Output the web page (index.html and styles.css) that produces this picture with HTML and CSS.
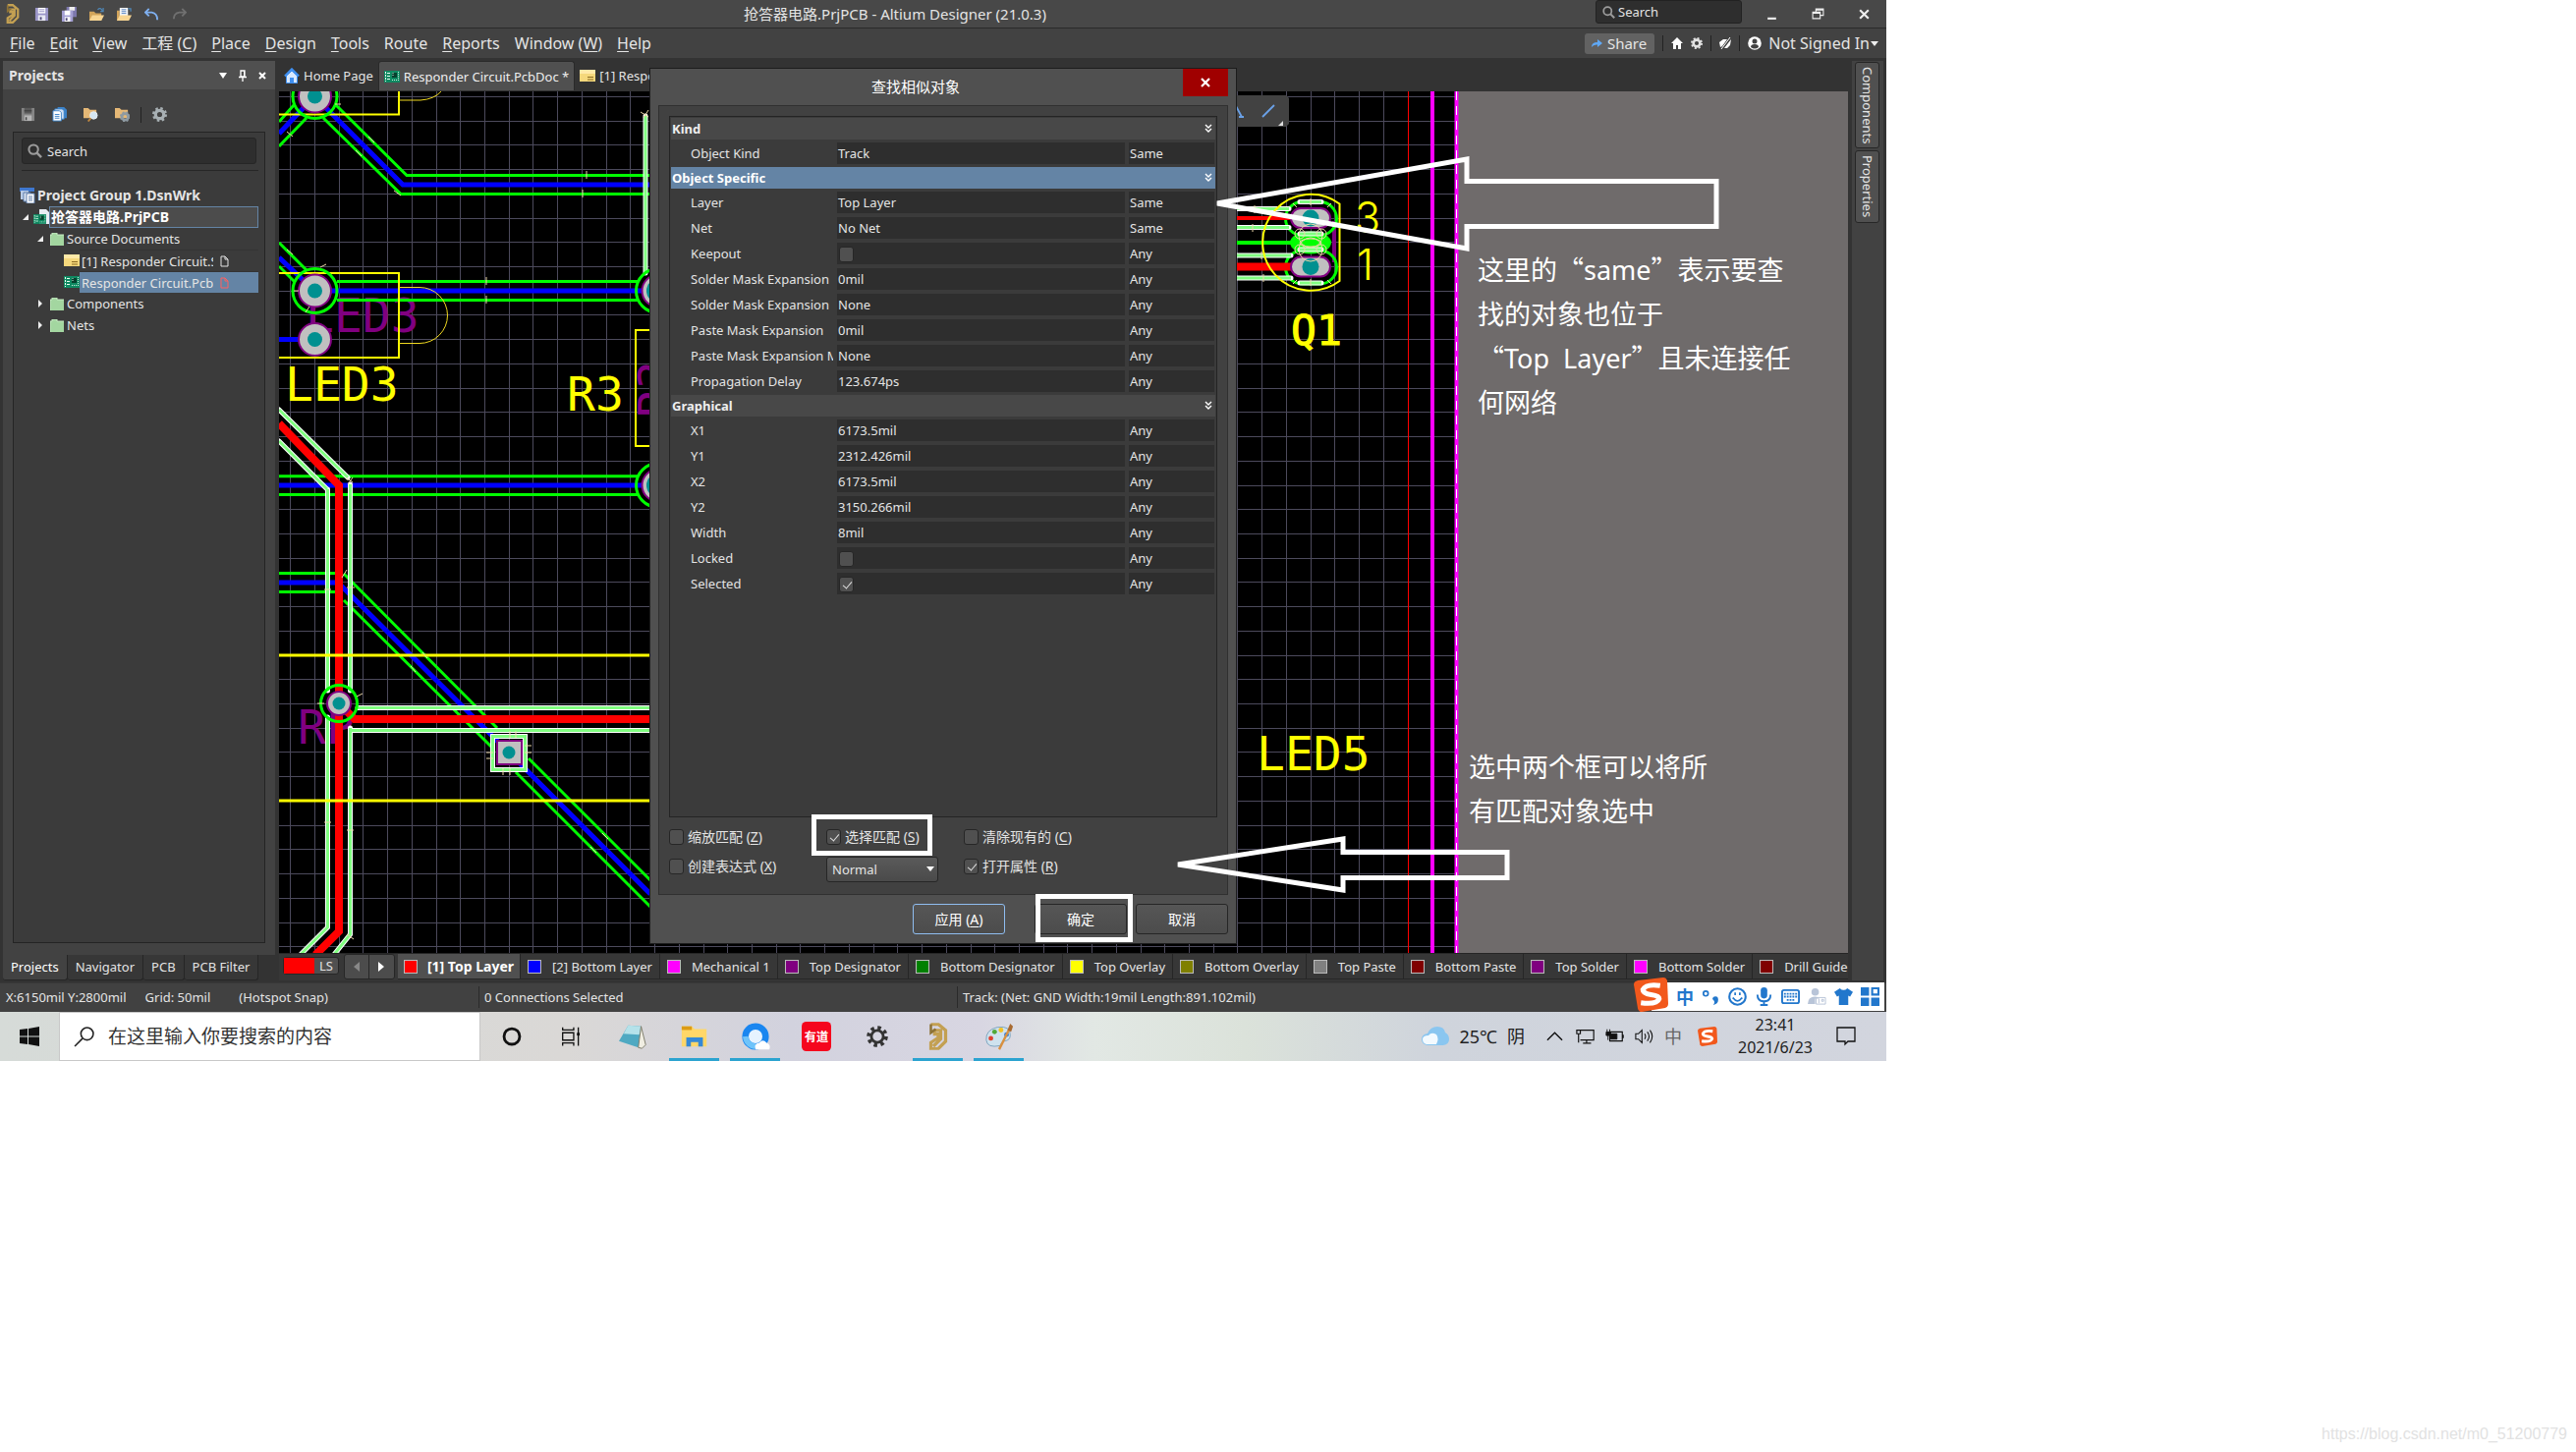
FILE: index.html
```html
<!DOCTYPE html>
<html lang="zh-CN">
<head>
<meta charset="utf-8">
<title>抢答器电路.PrjPCB - Altium Designer (21.0.3)</title>
<link rel="stylesheet" href="styles.css">
</head>
<body>
<svg class="defs" aria-hidden="true">
  <symbol id="i-altium" viewBox="0 0 16 22"><path d="M2 1l6 0 6 5v9l-6 6H2v-5l6-4V9H5V6h5v7l-6 6" fill="none" stroke="#c3a052" stroke-width="2.6"/><path d="M2 1v7l4-3" fill="none" stroke="#8d7236" stroke-width="2"/></symbol>
  <symbol id="i-save" viewBox="0 0 16 16"><path d="M1 1h14v14H1z" fill="#9a95c8"/><path d="M4 1h8v6H4z" fill="#fff"/><path d="M4 9h8v6H4z" fill="#e8e8f4"/><path d="M6 11h2v3H6z" fill="#55507e"/><path d="M5 3h6M5 5h6" stroke="#9a95c8"/></symbol>
  <symbol id="i-saveall" viewBox="0 0 16 16"><path d="M5 0h11v11H5z" fill="#7d78ad"/><path d="M8 0h6v4H8z" fill="#eee"/><path d="M0 4h12v12H0z" fill="#a5a0d4"/><path d="M3 4h6v5H3zM3 11h6v5H3z" fill="#fff"/><path d="M4 12h2v3H4z" fill="#55507e"/></symbol>
  <symbol id="i-open" viewBox="0 0 16 16"><path d="M0 15V5h5l2 2h6v8z" fill="#d2a45a"/><path d="M3 9h13l-3 6H0z" fill="#f8d592"/><path d="M9 3q3-3 5 1M15 1v4h-3" fill="none" stroke="#4f87b8" stroke-width="1.3"/></symbol>
  <symbol id="i-openp" viewBox="0 0 16 16"><path d="M0 15V4h3v11z" fill="#d2a45a"/><path d="M3 1h9v9H3z" fill="#f4f4f4"/><path d="M5 3h5M5 5h5M5 7h5" stroke="#5b86c4"/><path d="M3 9h13l-3 6H0z" fill="#f8d592"/><path d="M12 2h3v3" fill="none" stroke="#4f87b8" stroke-width="1.3"/></symbol>
  <symbol id="i-undo" viewBox="0 0 16 14"><path d="M5 1L1 5l4 4M1 5h7q6 1 6 8" fill="none" stroke="#7fb0f0" stroke-width="2"/></symbol>
  <symbol id="i-redo" viewBox="0 0 16 14"><path d="M11 1l4 4-4 4M15 5H8Q2 6 2 12" fill="none" stroke="#707070" stroke-width="2"/></symbol>
  <symbol id="i-mag" viewBox="0 0 16 16"><circle cx="6.5" cy="6.5" r="5" fill="none" stroke="#9b9b9b" stroke-width="2.2"/><path d="M10 10l5 5" stroke="#9b9b9b" stroke-width="2.6"/></symbol>
  <symbol id="i-gear" viewBox="0 0 16 16"><circle cx="8" cy="8" r="4.500" fill="none" stroke="currentColor" stroke-width="3.500"/><circle cx="8" cy="8" r="6.800" fill="none" stroke="currentColor" stroke-width="2.400" stroke-dasharray="2.670 2.670"/></symbol>
  <symbol id="i-savegray" viewBox="0 0 16 16"><path d="M1 1h14v14H1z" fill="#858585"/><path d="M4 1h8v6H4z" fill="#5a5a5a"/><path d="M4 9h8v6H4z" fill="#b5b5b5"/><path d="M4 4h8M6 11v3" stroke="#444" stroke-width="1.500"/></symbol>
  <symbol id="i-docs" viewBox="0 0 16 16"><path d="M6 0h7l3 3v9H6z" fill="#3c82c8"/><path d="M3 2h8l2 2v9H3z" fill="#cfe0f4" stroke="#3c82c8"/><path d="M1 4h7l2 2v9H1z" fill="#fff" stroke="#3c82c8"/><path d="M3 8h5M3 10h5M3 12h5" stroke="#3c82c8"/></symbol>
  <symbol id="i-foldmag" viewBox="0 0 16 16"><path d="M0 12V1h5l2 2h7v9z" fill="#e5b876"/><circle cx="11" cy="9" r="4" fill="#d5e6f2" stroke="#e8eef2"/><path d="M8 12l-3 3.500" stroke="#c28840" stroke-width="2"/></symbol>
  <symbol id="i-foldgear" viewBox="0 0 16 16"><path d="M0 12V1h5l2 2h7v9z" fill="#e5b876"/><circle cx="11" cy="10.500" r="3.500" fill="none" stroke="#8e9aa2" stroke-width="3"/><circle cx="11" cy="10.500" r="5" fill="none" stroke="#8e9aa2" stroke-width="1.500" stroke-dasharray="2 2"/></symbol>
  <symbol id="i-home" viewBox="0 0 16 16"><path d="M2.500 8L8 3l5.500 5v7.500h-11z" fill="#d7e8ff" stroke="#3f8ff0"/><path d="M6 10h4v6H6z" fill="#3f8ff0"/><path d="M1 8.500L8 1.500l7 7" fill="none" stroke="#3f8ff0" stroke-width="2.400"/></symbol>
  <symbol id="i-pcb" viewBox="0 0 16 12"><path d="M0 0h16v12H0z" fill="#0f8a62"/><path d="M8 2h5v5H8z" fill="#06402e"/><path d="M1.500 1v10" stroke="#e8fff0" stroke-dasharray="2 1"/><path d="M3 2.500h3M3 5.500h3M3 8.500h3" stroke="#e8fff0"/><path d="M9 2v4M14.500 1v10M8 9.500h6" stroke="#d0f0e0" stroke-dasharray="1 1"/></symbol>
  <symbol id="i-sch" viewBox="0 0 16 12"><path d="M0 0h16v12H0z" fill="#f5d87c"/><path d="M0 0h16v4H0z" fill="#ffe9a8"/><path d="M8 7.500h6M8 10h6" stroke="#8a6a20"/></symbol>
  <symbol id="i-folder" viewBox="0 0 14 13"><path d="M0 13V2h2V0h5v2h7v11z" fill="#a3d6a0"/><path d="M0 13V2h2V0h5v2h7" fill="none" stroke="#c8ecc4"/></symbol>
  <symbol id="i-group" viewBox="0 0 16 16"><path d="M0 0h15v4H0z" fill="#3f78d0"/><path d="M1 3h8v9H1z" fill="#b9cce6"/><path d="M4 5h7v9H4z" fill="#dfe8f4" stroke="#5a7aa8"/><path d="M7 6h8v10H7z" fill="#fff" stroke="#5a7aa8"/><path d="M9 9h4M9 11h4M9 13h4" stroke="#5a7aa8"/></symbol>
  <symbol id="i-doc" viewBox="0 0 9 12"><path d="M1 1h4l3 3v7H1zM5 1v3h3" fill="none" stroke="currentColor"/></symbol>
  <symbol id="i-sogou" viewBox="0 0 34 34"><path d="M4 3l25-3q3 0 4 3l1 23q0 3-3 4L8 34q-3 0-4-3L0 7q0-3 4-4z" fill="#f2581c"/><path d="M26 8Q12 6 9 12q0 4 8 5t8 4q-2 6-18 4" fill="none" stroke="#fff" stroke-width="5"/></symbol>
</svg>

<div class="desktop">
  <header class="titlebar">
    <nav class="quick" aria-label="Quick access">
      <svg class="logo"><use href="#i-altium"/></svg>
      <button aria-label="Save"><svg><use href="#i-save"/></svg></button>
      <button aria-label="Save all"><svg><use href="#i-saveall"/></svg></button>
      <button aria-label="Open"><svg><use href="#i-open"/></svg></button>
      <button aria-label="Open project"><svg><use href="#i-openp"/></svg></button>
      <button aria-label="Undo"><svg><use href="#i-undo"/></svg></button>
      <button aria-label="Redo"><svg><use href="#i-redo"/></svg></button>
    </nav>
    <h1>抢答器电路.PrjPCB - Altium Designer (21.0.3)</h1>
    <div class="wincontrols">
      <label class="topsearch"><svg><use href="#i-mag"/></svg><input type="text" placeholder="Search" aria-label="Search"></label>
      <button aria-label="Minimize"><svg viewBox="0 0 12 12"><path d="M2 10h8" stroke="#eee" stroke-width="2"/></svg></button>
      <button aria-label="Restore"><svg viewBox="0 0 12 12"><path d="M4 4V1h7v6H8M1 4h7v6H1zM1 5h7M4 2h7" fill="none" stroke="#eee"/></svg></button>
      <button aria-label="Close"><svg viewBox="0 0 12 12"><path d="M2 2l8 8M10 2l-8 8" stroke="#eee" stroke-width="2"/></svg></button>
    </div>
  </header>

  <div class="menubar">
    <nav class="menus">
      <a href="#"><u>F</u>ile</a><a href="#"><u>E</u>dit</a><a href="#"><u>V</u>iew</a><a href="#">工程 (<u>C</u>)</a><a href="#"><u>P</u>lace</a><a href="#"><u>D</u>esign</a><a href="#"><u>T</u>ools</a><a href="#">Ro<u>u</u>te</a><a href="#"><u>R</u>eports</a><a href="#">Window (<u>W</u>)</a><a href="#"><u>H</u>elp</a>
    </nav>
    <div class="account">
      <button class="share"><svg viewBox="0 0 12 12"><path d="M1 10q0-5 6-5V2l5 4-5 4V7.500Q3 7 1 10z" fill="#5fa8f5"/></svg>Share</button>
      <i class="sep"></i>
      <button aria-label="Home"><svg viewBox="0 0 12 12"><path d="M6 0l6 6h-2v6H7V8H5v4H2V6H0z" fill="#fff"/></svg></button>
      <button aria-label="Settings"><svg><use href="#i-gear"/></svg></button>
      <i class="sep"></i>
      <button aria-label="Notifications"><svg viewBox="0 0 12 12"><path d="M0 5l4-3h4L3 9l-2 1zM12 2L5 11h3l3-3z" fill="#fff"/><path d="M11 0L2 12" stroke="#fff"/></svg></button>
      <i class="sep"></i>
      <button class="user"><svg viewBox="0 0 14 14"><circle cx="7" cy="7" r="6.800" fill="#fff"/><circle cx="7" cy="5" r="2.500" fill="#424242"/><path d="M3 11q0-3 4-3t4 3q-4 3-8 0z" fill="#424242"/></svg>Not Signed In<i class="caret"></i></button>
    </div>
  </div>

  <div class="workspace">
    <aside class="side">
      <div class="panel">
        <div class="panel-head"><h2>Projects</h2>
          <button aria-label="Panel menu"><svg viewBox="0 0 12 12"><path d="M2 3h8L6 9z" fill="#fff"/></svg></button>
          <button aria-label="Pin"><svg viewBox="0 0 12 12"><path d="M4 1h4v6H4zM2 7.500h8M6 7v5" fill="none" stroke="#fff" stroke-width="1.300"/><path d="M7 1h1v6H7z" fill="#fff"/></svg></button>
          <button aria-label="Close panel"><svg viewBox="0 0 12 12"><path d="M3 3l6 6M9 3l-6 6" stroke="#fff" stroke-width="2"/></svg></button>
        </div>
        <div class="panel-tools">
          <button aria-label="Save"><svg><use href="#i-savegray"/></svg></button>
          <button aria-label="Compile"><svg><use href="#i-docs"/></svg></button>
          <button aria-label="Find"><svg><use href="#i-foldmag"/></svg></button>
          <button aria-label="Project options"><svg><use href="#i-foldgear"/></svg></button>
          <i class="sep"></i>
          <button class="dim" aria-label="Panel settings"><svg><use href="#i-gear"/></svg></button>
        </div>
        <div class="tree-box">
          <label class="panel-search"><svg><use href="#i-mag"/></svg><input type="text" placeholder="Search" aria-label="Search projects"></label>
          <ul class="tree">
            <li class="l0"><svg><use href="#i-group"/></svg><b>Project Group 1.DsnWrk</b></li>
            <li class="l1"><i class="open"></i><svg viewBox="0 0 16 16"><path d="M6 0h7l3 3v12H6z" fill="#e8ecf4"/><use href="#i-pcb" y="5" width="13" height="10"/></svg><b class="boxed">抢答器电路.PrjPCB</b></li>
            <li class="l2"><i class="open"></i><svg class="fold"><use href="#i-folder"/></svg><span>Source Documents</span></li>
            <li class="l3"><svg class="file"><use href="#i-sch"/></svg><div class="doc"><span>[1] Responder Circuit.S</span><svg><use href="#i-doc"/></svg></div></li>
            <li class="l3"><svg class="file"><use href="#i-pcb"/></svg><div class="doc picked"><span>Responder Circuit.Pcb</span><svg><use href="#i-doc"/></svg></div></li>
            <li class="l2"><i class="closed"></i><svg class="fold"><use href="#i-folder"/></svg><span>Components</span></li>
            <li class="l2"><i class="closed"></i><svg class="fold"><use href="#i-folder"/></svg><span>Nets</span></li>
          </ul>
        </div>
      </div>
      <nav class="panel-tabs"><button class="on">Projects</button><button>Navigator</button><button>PCB</button><button>PCB Filter</button></nav>
    </aside>

    <main class="editor">
      <nav class="doctabs">
        <button><svg class="homeico"><use href="#i-home"/></svg>Home Page</button>
        <button class="on"><svg><use href="#i-pcb"/></svg>Responder Circuit.PcbDoc *</button>
        <button><svg><use href="#i-sch"/></svg>[1] Responder Circuit.SchDoc</button>
      </nav>
      <svg class="board" viewBox="284 93 1599 877" preserveAspectRatio="xMinYMin slice">
        <path fill="#000" d="M284 93h1200v877H284z"/>
        <path fill="#6f6b6b" d="M1484 93h1400v877H1484z"/>
        <path class="grid" d="M295.500 93v877M320.500 93v877M345.500 93v877M369.500 93v877M394.500 93v877M419.500 93v877M444.500 93v877M468.500 93v877M493.500 93v877M518.500 93v877M542.500 93v877M567.500 93v877M592.500 93v877M617.500 93v877M641.500 93v877M666.500 93v877M691.500 93v877M716.500 93v877M740.500 93v877M765.500 93v877M790.500 93v877M814.500 93v877M839.500 93v877M864.500 93v877M889.500 93v877M913.500 93v877M938.500 93v877M963.500 93v877M988.500 93v877M1012.500 93v877M1037.500 93v877M1062.500 93v877M1086.500 93v877M1111.500 93v877M1136.500 93v877M1161.500 93v877M1185.500 93v877M1210.500 93v877M1235.500 93v877M1259.500 93v877M1284.500 93v877M1309.500 93v877M1334.500 93v877M1358.500 93v877M1383.500 93v877M1408.500 93v877"/>
        <path class="grid" d="M284 98.500h1200M284 123.500h1200M284 147.500h1200M284 172.500h1200M284 197.500h1200M284 222.500h1200M284 246.500h1200M284 271.500h1200M284 296.500h1200M284 320.500h1200M284 345.500h1200M284 370.500h1200M284 395.500h1200M284 419.500h1200M284 444.500h1200M284 469.500h1200M284 494.500h1200M284 518.500h1200M284 543.500h1200M284 568.500h1200M284 592.500h1200M284 617.500h1200M284 642.500h1200M284 667.500h1200M284 691.500h1200M284 716.500h1200M284 741.500h1200M284 765.500h1200M284 790.500h1200M284 815.500h1200M284 840.500h1200M284 864.500h1200M284 889.500h1200M284 914.500h1200M284 939.500h1200M284 963.500h1200"/>
        <g class="silk purple"><text x="311" y="338">LED3</text><text x="303" y="757">RP</text><text transform="translate(684 425) rotate(-90)">R3</text></g>
        <path class="blue" d="M320 98L284 136M320 98L410 188H662M284 262l36 34H662M284 345.500h30M284 494h378M284 593h60L518 766 662 910"/>
        <path class="green" d="M299 107l-15 17M312 120l-28 29M342 107l72 71.500H662M329 120l79 77.500H662M284 247l28 28M284 271l16 16M343 286.500H649M343 305.500H649M284 484.700H649M284 503.500H649M284 583.500h60M284 602.500h58M350 584L506 741M350 611L500 760M538 772L662 896M525 786L662 923"/>
        <path class="yel" d="M284 116.500h122V93M284 278h122v86H284M662 336h-15v118h15"/>
        <path class="yel thin" d="M406 102h22q14-1 21-9M406 292.500h21a28.500 28.500 0 0 1 0 57H406"/>
        <path class="red" d="M284 431l61 63v454l-24 24M345 716l16 16h301"/>
        <path class="halo" d="M284 417l70 69M284 449l49 49M333.500 498v205M333.500 730v214l-27 27M356.500 493v210M356.500 741v210l-16 20M364 720.500h298M357 743.500h305M657 118v160M501.500 749.500h33v34h-33z"/>
        <path class="halo2" d="M284 417l70 69M284 449l49 49M333.500 498v205M333.500 730v214l-27 27M356.500 493v210M356.500 741v210l-16 20M364 720.500h298M357 743.500h305M657 118v160M501.500 749.500h33v34h-33z"/>
        <path class="yel bar" d="M284 667h378M284 815h378"/>
        <g class="ring"><circle cx="320.500" cy="98" r="22.500"/><circle cx="320.500" cy="296" r="22.500"/><circle cx="670" cy="296" r="22.500"/><circle cx="670" cy="494" r="22.500"/><circle cx="345" cy="716" r="18.500"/></g>
        <g class="pad"><circle cx="320.500" cy="98" r="16.500"/><circle cx="320.500" cy="296" r="16.500"/><circle cx="320.500" cy="345.500" r="16.500"/><circle cx="670" cy="296" r="16.500"/><circle cx="670" cy="494" r="16.500"/><circle cx="345" cy="716" r="12"/><path d="M506 754h25v24h-25z"/></g>
        <g class="hole"><circle cx="320.500" cy="98" r="7.500"/><circle cx="320.500" cy="296" r="7.500"/><circle cx="320.500" cy="345.500" r="7.500"/><circle cx="670" cy="296" r="12"/><circle cx="670" cy="494" r="12"/><circle cx="345" cy="716" r="6.500"/><circle cx="518" cy="766" r="6.500"/></g>
        <path class="tick" d="M375 139l6 6M362 153l6 6M401 194l7 5M597 174v8M593 193v8M292 134l6 5M292 254l6 5M495 282v8M495 301v8M299 296h5M326 272l6-3M311 318l4-6M341 106h6M652 114l8 5M660 112l-5 8M330 600h7M353 580l-5 8M353 598h8M430 664l5 6M418 678l5 6M352 486l7 5M359 486l-5 7M323 716h7M363 709l6-3M613 848l6 6M601 862l6 6M330 837h7M353 845h7M353 951l7 5M519 744v7M525 744v7M519 782v7M512 782v7M495 766h7M495 772h7M534 759h7M534 766h7"/>
        <g class="silk"><text x="290" y="408">LED3</text><text x="577" y="418">R3</text><text x="1279" y="784">LED5</text></g>
        <text class="heavy" x="1314" y="351">Q1</text>
        <g class="silk light"><text x="1379" y="237">3</text><text x="1381" y="285">1</text></g>

        <path class="purpleline" d="M1358 225v42"/>
        <path class="greenfat" d="M1258 247h60"/>
        <g class="ring"><rect x="1308.500" y="205.500" width="52" height="34" rx="17"/><rect x="1308.500" y="255" width="52" height="34" rx="17"/></g>
        <ellipse cx="1334" cy="247" rx="21" ry="11.500" fill="#0f0"/>
        <path stroke="#f00" stroke-width="4" d="M1258 222h60"/><path stroke="#f00" stroke-width="8" d="M1258 271.500h60"/>
        <g class="pad"><rect x="1314" y="212" width="40" height="20" rx="10"/><rect x="1314" y="261.500" width="40" height="20" rx="10"/></g>
        <g class="hole"><circle cx="1334" cy="222" r="8.500"/><circle cx="1334" cy="271.500" r="8.500"/></g>
        <path class="halo" d="M1258 212.500h54M1258 231.500h54M1258 260h56M1258 283h56M1323 205.500h22M1323 238h22M1323 254h22M1323 288h22"/>
        <path class="halo2" d="M1258 212.500h54M1258 231.500h54M1258 260h56M1258 283h56M1323 205.500h22M1323 238h22M1323 254h22M1323 288h22"/>
        <g class="tan"><circle cx="1334" cy="240" r="12"/><circle cx="1334" cy="254" r="12"/><circle cx="1323" cy="238" r="5"/><circle cx="1345" cy="238" r="5"/><circle cx="1323" cy="254" r="5"/><circle cx="1345" cy="254" r="5"/><ellipse cx="1334" cy="247" rx="11" ry="4"/><path d="M1334 202v7M1334 284v7M1277 209v8M1275 228v8M1284 256v8M1286 279v8M1316 207l4 4M1355 207l-4 4M1316 289l4-4M1355 289l-4-4"/></g>
        <path class="yel" d="M1363.500 207.500v78.500a49 49 0 1 1 0-78.500z"/>
        <path stroke="#f00" d="M1433.500 93v877" shape-rendering="crispEdges"/>
        <path stroke="#f0f" stroke-width="4" d="M1458 93v877M1482.500 93v877"/>
        <path stroke="#fff" stroke-dasharray="9 6" d="M1482.500 93v877"/>
        <path fill="#424242" d="M1240 97h69l3 3v26l-3 3h-69z"/><path d="M1285 119l12-12M1254 119l4-11 6 11M1261 119h5" fill="none" stroke="#6aa0e6" stroke-width="1.800"/><path d="M1306 123v5h-5z" fill="#ddd"/>
      </svg>
      <div class="layerbar">
        <div class="ls"><i></i><span>LS</span></div>
        <div class="pager"><button class="off" aria-label="Previous layers"><svg viewBox="0 0 6 10"><path d="M6 0v10L0 5z" fill="#888"/></svg></button><button aria-label="Next layers"><svg viewBox="0 0 6 10"><path d="M0 0v10l6-5z" fill="#fff"/></svg></button></div>
        <nav class="layers">
          <button class="on"><i class="c-red"></i>[1] Top Layer</button><button><i class="c-blue"></i>[2] Bottom Layer</button><button><i class="c-mag"></i>Mechanical 1</button><button><i class="c-pur"></i>Top Designator</button><button><i class="c-grn"></i>Bottom Designator</button><button><i class="c-yel"></i>Top Overlay</button><button><i class="c-olv"></i>Bottom Overlay</button><button><i class="c-gry"></i>Top Paste</button><button><i class="c-mar"></i>Bottom Paste</button><button><i class="c-pur"></i>Top Solder</button><button><i class="c-mag"></i>Bottom Solder</button><button><i class="c-mar"></i>Drill Guide</button>
        </nav>
      </div>
    </main>

    <nav class="dock"><button>Components</button><button>Properties</button></nav>
  </div>

  <footer class="status">
    <span class="s1"><span>X:6150mil Y:2800mil</span><span>Grid: 50mil</span><span class="snap">(Hotspot Snap)</span></span>
    <span class="s2">0 Connections Selected</span>
    <span class="s3">Track: (Net: GND Width:19mil Length:891.102mil)</span>
  </footer>

  <div class="taskbar">
    <button class="start" aria-label="Start"><svg viewBox="0 0 20 20"><path d="M0 3l8-1v7.500H0zM9 2l11-2v9.500H9zM0 10.500h8V18l-8-1zM9 10.500h11V20L9 18z" fill="#111"/></svg></button>
    <label class="tasksearch"><svg viewBox="0 0 20 20"><circle cx="13" cy="7" r="6" fill="none" stroke="#222" stroke-width="1.500"/><path d="M8.500 11.500L1 19" stroke="#222" stroke-width="1.500"/></svg><input type="text" placeholder="在这里输入你要搜索的内容" aria-label="搜索"></label>
    <nav class="apps">
      <button aria-label="Cortana"><svg viewBox="0 0 32 32"><circle cx="16" cy="16" r="8.500" fill="none" stroke="#111" stroke-width="3"/></svg></button>
      <button aria-label="任务视图"><svg viewBox="0 0 32 32"><path d="M5 6v3h12V6M5 26v-3h12v3M5 12h12v8H5zM22 6v20" fill="none" stroke="#111" stroke-width="1.400"/><path d="M20.500 12h3v3h-3z" fill="#111"/></svg></button>
      <button aria-label="记事本"><svg viewBox="0 0 32 32"><path d="M10 4l14 1-3 23-21-7z" fill="#4fa9c2"/><path d="M10 4l14 1-2 9-17-1z" fill="#b5e2ea"/><path d="M24 5l5 20-4 4-4-1z" fill="#f0eee2" stroke="#7b7a68"/></svg></button>
      <button class="run" aria-label="文件资源管理器"><svg viewBox="0 0 32 32"><path d="M2 5h11l3 3h13v19H2z" fill="#ffd768"/><path d="M2 5h11v4H2z" fill="#dc9c14"/><path d="M7 27V17h18v10h-5v-5h-8v5z" fill="#3489d6"/></svg></button>
      <button class="run" aria-label="浏览器"><svg viewBox="0 0 32 32"><circle cx="16" cy="16" r="11" fill="#e6f3ff" stroke="#1a86f0" stroke-width="7"/><path d="M5 16q1 9 11 11" fill="none" stroke="#6fc4fa" stroke-width="6"/><path d="M16 30q-2-6 4-7 4-5 8 0 5 2 3 7z" fill="#fff"/></svg></button>
      <button aria-label="有道"><svg viewBox="0 0 32 32"><rect x="0" y="0" width="32" height="32" rx="5" fill="#f5061d"/><text x="16" y="21" text-anchor="middle" font-size="13" font-weight="700" fill="#fff">有道</text></svg></button>
      <button aria-label="设置"><svg viewBox="0 0 32 32"><circle cx="16" cy="16" r="6.500" fill="none" stroke="#333" stroke-width="3"/><circle cx="16" cy="16" r="9.500" fill="none" stroke="#333" stroke-width="4" stroke-dasharray="3.730 3.730"/></svg></button>
      <button class="run" aria-label="Altium Designer"><svg viewBox="0 0 16 24"><use href="#i-altium" y="1" width="16" height="22"/></svg></button>
      <button class="run" aria-label="画图"><svg viewBox="0 0 32 32"><path d="M2 20Q1 9 14 6q15-2 14 9 0 5-6 6-4 1-5 5-14 3-15-6z" fill="#cfe2ee" stroke="#7aa2be"/><circle cx="7" cy="18" r="2.600" fill="#e04030"/><circle cx="11" cy="11" r="2.600" fill="#50a838"/><circle cx="18" cy="9" r="2.600" fill="#f2c224"/><circle cx="24" cy="14" r="2.600" fill="#3880d8"/><path d="M27 8L16 30" stroke="#d89040" stroke-width="2.600"/><path d="M25 9l3-7 3 3-2 6z" fill="#a86a30"/></svg></button>
    </nav>
    <div class="tray">
      <svg class="cloud" viewBox="0 0 28 20"><path d="M6 19q-6-1-6-6t6-6q3-7 10-7t8 6q4 2 4 7t-6 6z" fill="#8ac6f0"/><path d="M5 18q-4-1-4-5t6-4q3-4 8-1 3 4 0 10z" fill="#f3faff"/></svg>
      <span class="temp">25℃</span><span class="temp">阴</span>
      <svg class="chev" viewBox="0 0 18 12"><path d="M1 10l8-8 8 8" fill="none" stroke="#111" stroke-width="1.500"/></svg>
      <svg viewBox="0 0 22 18"><path d="M5 2h15v11H5M12 13v3M8 16.500h9M1 2h4v4H1zM3 6v10" fill="none" stroke="#111" stroke-width="1.300"/></svg>
      <svg viewBox="0 0 22 18"><path d="M5 4h14v10H5zM20 7v4" fill="none" stroke="#111" stroke-width="1.300"/><path d="M6 6h7v6H6zM1 4h5v4H1zM2 1v3M5 1v3M3 8v5" fill="#111" stroke="#111"/></svg>
      <svg viewBox="0 0 22 18"><path d="M1 6h3l4-4v14l-4-4H1zM11 6q2 3 0 6M14 4q4 5 0 10M17 2q5 7 0 14" fill="none" stroke="#111" stroke-width="1.200"/></svg>
      <span class="ime">中</span>
      <svg class="sg"><use href="#i-sogou"/></svg>
      <time class="clock"><span>23:41</span><span>2021/6/23</span></time>
      <svg class="note" viewBox="0 0 20 20"><path d="M1 1h18v14h-7l-3 3v-3H1z" fill="none" stroke="#111" stroke-width="1.300"/></svg>
    </div>
  </div>

  <section class="imebar" aria-label="输入法">
    <svg class="sgbig"><use href="#i-sogou"/></svg>
    <b>中</b>
    <svg viewBox="0 0 18 18"><circle cx="4" cy="6" r="2.300" fill="none" stroke="#2277cc" stroke-width="1.600"/><path d="M12 9q4-1 4 3t-5 5q2-2 1-4-3-2 0-4z" fill="#2277cc"/></svg>
    <svg viewBox="0 0 20 20"><circle cx="10" cy="10" r="8.700" fill="none" stroke="#2277cc" stroke-width="2.200"/><path d="M7.500 5.500v3M12.500 5.500v3M5 11q5 7 10 0" fill="none" stroke="#2277cc" stroke-width="1.800"/></svg>
    <svg viewBox="0 0 18 20"><rect x="5.500" y="0" width="7" height="12" rx="3.500" fill="#2277cc"/><path d="M2 8q0 7 7 7t7-7M9 15v4M5 19h8" fill="none" stroke="#2277cc" stroke-width="2"/></svg>
    <svg viewBox="0 0 20 16"><rect x="1" y="1" width="18" height="14" rx="2" fill="none" stroke="#2277cc" stroke-width="2"/><path d="M3 5h14M3 8h14M6 11.500h8" stroke="#2277cc" stroke-width="2" stroke-dasharray="2 1"/></svg>
    <svg viewBox="0 0 20 18"><circle cx="8" cy="4" r="4" fill="#b8c4d8"/><path d="M0 17q0-8 8-8 3 0 4 2H8v6z" fill="#b8c4d8"/><path d="M9 10h10v7H9zM12 11v5M15 12h2v2h-2z" fill="none" stroke="#b8c4d8"/></svg>
    <svg viewBox="0 0 20 18"><path d="M6 0q4 4 8 0l6 4-3 5-2-1v10H5V8L3 9 0 4z" fill="#2277cc"/></svg>
    <svg viewBox="0 0 18 18"><path d="M0 0h8v8H0zM0 10h8v8H0zM10 10h8v8h-8z" fill="#2277cc"/><path d="M11 1h6v6h-6z" fill="none" stroke="#2277cc" stroke-width="2"/></svg>
  </section>

  <form class="dialog" onsubmit="return false">
    <div class="dlg-head"><h2>查找相似对象</h2><button type="button" class="dlg-close" aria-label="关闭"><svg viewBox="0 0 12 12"><path d="M2 2l8 8M10 2l-8 8" stroke="#fff" stroke-width="2.200"/></svg></button></div>
    <div class="dlg-body">
      <div class="list">
        <table class="props">
          <colgroup><col class="k"><col class="v"><col></colgroup>
          <tbody>
          <tr class="grp"><th colspan="3">Kind<svg viewBox="0 0 8 10"><path d="M1 1l3 3 3-3M1 5l3 3 3-3" fill="none" stroke="#fff" stroke-width="1.400"/></svg></th></tr>
          <tr><th>Object Kind</th><td>Track</td><td>Same</td></tr>
          <tr class="grp sel"><th colspan="3">Object Specific<svg viewBox="0 0 8 10"><path d="M1 1l3 3 3-3M1 5l3 3 3-3" fill="none" stroke="#fff" stroke-width="1.400"/></svg></th></tr>
          <tr><th>Layer</th><td>Top Layer</td><td>Same</td></tr>
          <tr><th>Net</th><td>No Net</td><td>Same</td></tr>
          <tr><th><label for="keepout">Keepout</label></th><td><input type="checkbox" id="keepout"></td><td>Any</td></tr>
          <tr><th>Solder Mask Expansion</th><td>0mil</td><td>Any</td></tr>
          <tr><th>Solder Mask Expansion</th><td>None</td><td>Any</td></tr>
          <tr><th>Paste Mask Expansion</th><td>0mil</td><td>Any</td></tr>
          <tr><th>Paste Mask Expansion M</th><td>None</td><td>Any</td></tr>
          <tr><th>Propagation Delay</th><td>123.674ps</td><td>Any</td></tr>
          <tr class="grp"><th colspan="3">Graphical<svg viewBox="0 0 8 10"><path d="M1 1l3 3 3-3M1 5l3 3 3-3" fill="none" stroke="#fff" stroke-width="1.400"/></svg></th></tr>
          <tr><th>X1</th><td>6173.5mil</td><td>Any</td></tr>
          <tr><th>Y1</th><td>2312.426mil</td><td>Any</td></tr>
          <tr><th>X2</th><td>6173.5mil</td><td>Any</td></tr>
          <tr><th>Y2</th><td>3150.266mil</td><td>Any</td></tr>
          <tr><th>Width</th><td>8mil</td><td>Any</td></tr>
          <tr><th><label for="locked">Locked</label></th><td><input type="checkbox" id="locked"></td><td>Any</td></tr>
          <tr><th><label for="selected">Selected</label></th><td><input type="checkbox" id="selected" checked></td><td>Any</td></tr>
          </tbody>
        </table>
      </div>
      <div class="opts">
        <label><input type="checkbox">缩放匹配 (<u>Z</u>)</label>
        <label><input type="checkbox" checked>选择匹配 (<u>S</u>)</label>
        <label><input type="checkbox">清除现有的 (<u>C</u>)</label>
        <label><input type="checkbox">创建表达式 (<u>X</u>)</label>
        <div class="pick"><select aria-label="Mode"><option>Normal</option></select></div>
        <label><input type="checkbox" checked>打开属性 (<u>R</u>)</label>
      </div>
    </div>
    <div class="dlg-foot"><button type="button" class="primary">应用 (<u>A</u>)</button><button type="submit" class="ok">确定</button><button type="button">取消</button></div>
  </form>

  <svg class="marks" aria-hidden="true"><path d="M1239 207L1493 162v22.500h254v46h-254V253zM1199 880l168-26v13.500h167v26h-167V906zM828.500 831.500h118v37h-118zM1056.500 912.500h94v44h-94z"/></svg>
  <p class="memo memo-a">这里的“<span>same</span>”表示要查<br>找的对象也位于<br>“<span>Top  Layer</span>”且未连接任<br>何网络</p>
  <p class="memo memo-b">选中两个框可以将所<br>有匹配对象选中</p>
</div>

<p class="source">https://blog.csdn.net/m0_51200779</p>
</body>
</html>
```
FILE: styles.css
```css
* { box-sizing: border-box; }

body {
  margin: 0;
  min-height: 100vh;
  display: flex;
  flex-direction: column;
  background: #fff;
  color: #e4e4e4;
  font: 13px/18px "Noto Sans", "Noto Sans CJK SC", sans-serif;
}

h1, h2, p, ul { margin: 0; padding: 0; font-weight: 400; }
button, input, select { font: inherit; color: inherit; margin: 0; padding: 0; border: 0; background: none; }
input[type="text"] { outline: 0; min-width: 0; width: 100%; }
input::placeholder { color: inherit; opacity: 1; }
button { display: flex; align-items: center; white-space: nowrap; }
a { color: inherit; text-decoration: none; }
u { text-underline-offset: 2px; }
svg { flex: none; display: block; }
.defs { position: absolute; width: 0; height: 0; }
.sep { width: 1px; height: 16px; background: #222; }

.desktop {
  position: relative;
  width: calc(100% - 702px);
  min-width: 1300px;
  background: #333;
}

/* Title bar */
.titlebar {
  display: grid;
  grid-template-columns: 1fr auto 1fr;
  align-items: center;
  height: 29px;
  padding: 0 16px 0 6px;
  background: #484848;
  border-bottom: 1px solid #2a2a2a;
}
.titlebar h1 { margin-right: 88px; font-size: 15px; line-height: 20px; white-space: nowrap; }
.quick { display: flex; gap: 13px; align-items: center; }
.quick svg { width: 15px; height: 15px; }
.quick .logo { width: 14px; height: 20px; margin-right: 2px; }
.wincontrols { display: flex; align-items: center; justify-content: flex-end; gap: 34px; }
.wincontrols button svg { width: 13px; height: 13px; }
.topsearch {
  display: flex; align-items: center; gap: 3px;
  width: 149px; height: 24px; padding: 0 6px; margin: -4px -10px 0 0;
  background: #2e2e2e; border: 1px solid #222; border-radius: 3px;
}
.topsearch svg { width: 13px; height: 13px; }

/* Menu bar */
.menubar {
  display: flex; justify-content: space-between; align-items: center;
  height: 30px; padding: 0 8px 0 10px;
  background: #424242;
  font-size: 15px; line-height: 20px;
}
.menus { display: flex; gap: 15px; font-size: 16px; white-space: nowrap; }
.account { display: flex; align-items: center; gap: 8px; }
.account svg { width: 12px; height: 12px; }
.share { gap: 5px; height: 21px; padding: 0 8px 0 6px; border-radius: 3px; background: #626262; }
.user { gap: 7px; font-size: 16px; }
.user svg { width: 14px; height: 14px; }
.caret { border: 4px solid transparent; border-top: 5px solid #eee; border-bottom: 0; margin-left: -6px; }

/* Workspace columns */
.workspace {
  display: grid;
  grid-template-columns: 277px minmax(0, 1fr) 32px;
  gap: 0 4px;
  padding: 3px 3px 2px;
}
.side { display: flex; flex-direction: column; }
.panel { flex: 1; display: flex; flex-direction: column; background: #424242; padding-bottom: 12px; }
.panel-head { display: flex; align-items: center; gap: 8px; height: 29px; padding: 0 7px 0 6px; background: #505050; }
.panel-head h2 { flex: 1; font-size: 14px; font-weight: 700; }
.panel-head svg { width: 12px; height: 12px; }
.panel-tools { display: flex; align-items: center; gap: 17px; height: 43px; padding: 8px 18px 0; }
.panel-tools svg { width: 15px; height: 15px; }
.panel-tools .sep { margin: 0 -6px; }
.dim { color: #a8b0b4; }
.tree-box { flex: 1; margin: 0 10px; padding: 5px 6px 0 8px; background: #3b3b3b; border: 1px solid #242424; }
.panel-search {
  display: flex; align-items: center; gap: 5px;
  height: 27px; margin-right: 2px; padding: 0 5px;
  background: #2e2e2e; border: 1px solid #262626; border-radius: 3px;
}
.panel-search svg { width: 15px; height: 15px; }
.tree { list-style: none; margin-top: 6px; padding-top: 14px; border-top: 1px solid #262626; }
.tree li { display: flex; align-items: center; gap: 2px; height: 22px; margin-left: -2px; white-space: nowrap; }
.tree svg { width: 16px; height: 16px; }
.tree b { font-size: 14px; }
.tree .fold { width: 14px; height: 13px; margin-right: 1px; }
.tree .file { width: 16px; height: 12px; }
.tree .l1 { padding-left: 3px; gap: 0; }
.tree .l2 { padding-left: 18px; }
.tree .l3 { padding-left: 45px; gap: 0; }
.boxed { flex: 1; height: 22px; padding-left: 1px; line-height: 20px; border: 1px solid #6484a5; background: #4c4c4c; color: #fff; }
.open { border-left: 6px solid transparent; border-bottom: 6px solid #eee; margin-right: 5px; }
.closed { border: 4px solid transparent; border-left: 4px solid #eee; border-right: 0; margin: 0 6px 0 1px; }
.doc { flex: 1; display: flex; align-items: center; height: 22px; padding-left: 2px; border-top: 1px solid #343434; }
.doc span { width: 134px; overflow: hidden; }
.tree .doc svg { width: 9px; height: 12px; margin-left: 7px; }
.picked { background: #6484a5; }
.picked svg { color: #ff6060; }

.panel-tabs { display: flex; height: 26px; }
.panel-tabs button { padding: 0 8px 2px; border: 1px solid #262626; border-top: 0; border-left: 0; border-radius: 0 0 3px 3px; background: #373737; }
.panel-tabs .on { background: #424242; color: #fff; }

/* Editor */
.doctabs { display: flex; height: 31px; overflow: hidden; }
.doctabs button { gap: 4px; height: 30px; padding: 0 5px; }
.doctabs .on { background: #505050; border: 1px solid #2a2a2a; border-bottom: 0; border-radius: 3px 3px 0 0; color: #eee; }
.doctabs svg { width: 16px; height: 12px; }
.doctabs .homeico { width: 16px; height: 16px; }
.board { width: 100%; height: 877px; }
.grid { stroke: #4c4a5c; fill: none; shape-rendering: crispEdges; }
.silk { font: 48px "DejaVu Sans Mono", monospace; fill: #ff0; }
.purple { fill: #800080; }
.heavy { font: 43px "DejaVu Sans Mono", monospace; fill: #ff0; stroke: #ff0; stroke-width: 1px; }
.light { font: 300 43px Inter, Roboto, sans-serif; }
.blue { fill: none; stroke: #00f; stroke-width: 5px; }
.green { fill: none; stroke: #0f0; stroke-width: 3px; }
.greenfat { stroke: #0f0; stroke-width: 4px; }
.purpleline { stroke: #800080; stroke-width: 4px; }
.yel { fill: none; stroke: #ff0; stroke-width: 2px; }
.thin { stroke: #f0d820; stroke-width: 1px; }
.bar { stroke-width: 3px; }
.red { fill: none; stroke: #f00; stroke-width: 8px; }
.halo { fill: none; stroke: #fff; stroke-width: 5px; stroke-linecap: round; }
.halo2 { fill: none; stroke: #80ff80; stroke-width: 3px; }
.ring { fill: none; stroke: #0f0; stroke-width: 3px; }
.pad { fill: #c0c0c0; stroke: #800080; stroke-width: 2px; }
.hole { fill: #009090; }
.tick, .tan { fill: none; stroke: #ecd8a8; }

.layerbar { display: flex; align-items: flex-start; height: 28px; overflow: hidden; border-top: 1px solid #262626; background: #373737; }
.ls { display: flex; height: 18px; margin: 3px 5px 0 4px; border: 1px solid #262626; border-radius: 3px; background: #505050; }
.ls i { width: 31px; background: #f00; }
.ls span { padding: 0 5px; line-height: 17px; }
.pager { display: flex; height: 26px; margin-right: 3px; border: 1px solid #262626; border-radius: 3px; background: #4c4c4c; }
.pager button { width: 25px; justify-content: center; }
.pager svg { width: 6px; height: 10px; }
.pager .off { border-right: 1px solid #262626; }
.layers { display: flex; }
.layers button { gap: 11px; height: 26px; padding: 0 7px; border: 1px solid #262626; border-width: 0 1px 1px 0; }
.layers .on { gap: 10px; padding: 0 6px; background: #505050; color: #fff; font-size: 14px; font-weight: 700; }
.layers button:last-child { padding-right: 0; border-right: 0; }
.layers i { width: 14px; height: 14px; border: 1px solid #bbb; }
.c-red { background: #f00; } .c-blue { background: #00f; } .c-mag { background: #f0f; }
.c-pur { background: #800080; } .c-grn { background: #008000; } .c-yel { background: #ff0; }
.c-olv { background: #808000; } .c-gry { background: #808080; } .c-mar { background: #800000; }

.dock { display: flex; flex-direction: column; gap: 2px; padding: 1px 3px; background: #424242; }
.dock button { writing-mode: vertical-rl; justify-content: center; width: 25px; padding: 4px 0; border: 1px solid #262626; border-radius: 3px; background: #505050; }

/* Status bar */
.status {
  display: grid;
  grid-template-columns: 487px 487px 1fr;
  align-items: center;
  height: 30px;
  padding-bottom: 2px;
  background: #414141;
  border-top: 1px solid #383838;
  white-space: nowrap;
}
.s1 { display: flex; gap: 19px; padding-left: 6px; }
.snap { margin-left: 10px; }
.s2, .s3 { padding-left: 5px; border-left: 1px solid #2a2a2a; line-height: 22px; }

/* Taskbar */
.taskbar {
  display: flex; align-items: center;
  height: 50px;
  color: #222;
  background: linear-gradient(90deg, #d6dbd8, #dad8d6 30%, #d2d2de 42%, #d8d6e2 52%, #e2e8e4 58%, #dbe2da 66%, #cfd4dc 76%, #d2d5de);
}
.start { width: 60px; height: 50px; justify-content: center; }
.start svg { width: 20px; height: 20px; }
.tasksearch { display: flex; align-items: center; gap: 14px; width: 429px; height: 50px; padding: 0 14px; background: #fff; border: 1px solid #c8c8c8; font-size: 19px; color: #333; }
.tasksearch svg { width: 21px; height: 21px; }
.apps { display: flex; gap: 11px; padding-left: 6px; }
.apps button { width: 51px; height: 50px; justify-content: center; border: solid transparent; border-width: 3px 0; }
.apps .run { border-bottom-color: #2ba3d0; }
.apps svg { width: 30px; height: 30px; }
.tray { flex: 1; display: flex; align-items: center; justify-content: flex-end; gap: 10px; padding-right: 31px; }
.tray svg { width: 20px; height: 18px; }
.tray .cloud { width: 28px; height: 20px; }
.temp { font-size: 18px; line-height: 24px; }
.tray .chev { width: 17px; height: 12px; margin: 0 3px 0 12px; }
.ime { font-size: 18px; color: #666; }
.tray .sg { width: 20px; height: 20px; margin-left: 6px; }
.clock { display: flex; flex-direction: column; align-items: center; width: 78px; margin: 0 13px 0 10px; font-size: 16px; line-height: 23px; }
.tray .note { width: 20px; height: 20px; }

/* Floating input-method bar */
.imebar {
  position: absolute; top: 1000px; right: 2px;
  display: flex; align-items: center; justify-content: space-between;
  width: 255px; height: 29px; padding-right: 5px;
  background: linear-gradient(90deg, transparent 18px, #fff 18px);
  color: #2277cc;
}
.imebar svg { width: 19px; height: 19px; }
.imebar .sgbig { width: 35px; height: 35px; margin-top: -4px; }
.imebar b { font-size: 18px; }

/* Find-similar dialog */
.dialog {
  position: absolute; top: 69px; left: 661px;
  width: 598px;
  padding: 0 8px 9px;
  background: #505050;
  border: 1px solid #1c1c1c;
}
.dlg-head { display: flex; align-items: flex-start; height: 37px; }
.dlg-head h2 { flex: 1; padding-right: 10px; text-align: center; font-size: 15px; line-height: 37px; color: #fff; }
.dlg-close { width: 46px; height: 28px; justify-content: center; background: #a00000; }
.dlg-close svg { width: 12px; height: 12px; }
.dlg-body { padding: 10px; background: #414141; border: 1px solid #303030; }
.list { min-height: 714px; background: #3b3b3b; border: 1px solid #242424; }
.props { width: 100%; table-layout: fixed; border-spacing: 0; }
.props .k { width: 168px; }
.props .v { width: 297px; }
.props th, .props td {
  height: 26px; padding: 0 1px; overflow: hidden;
  border: 2px solid transparent; background-clip: padding-box;
  text-align: left; font-weight: 400; line-height: 18px; white-space: nowrap;
}
.props th { padding: 0 0 0 19px; }
.props td { background-color: #2e2e2e; }
.props .grp th { position: relative; height: 24px; padding: 0 1px; border-width: 1px; font-weight: 700; background-color: #484848; color: #eee; }
.props .sel th { background-color: #6484a5; color: #fff; }
.grp svg { position: absolute; right: 3px; top: 6px; width: 8px; height: 10px; }
.props input { vertical-align: middle; margin: -2px 0 0 1px; }

input[type="checkbox"] {
  appearance: none; flex: none;
  position: relative;
  width: 15px; height: 16px;
  background: #505050; border: 1px solid #262626; border-radius: 3px;
}
input[type="checkbox"]:checked::after {
  content: ""; position: absolute; left: 5px; top: 2px;
  width: 4px; height: 8px;
  border: solid #ddd; border-width: 0 1px 1px 0;
  transform: rotate(40deg);
}
.opts {
  display: grid;
  grid-template-columns: 160px 140px 1fr;
  grid-auto-rows: 30px;
  align-items: center;
  padding: 5px 0 3px;
  font-size: 14px;
}
.opts label { display: flex; align-items: center; white-space: pre; }
.opts input { margin-right: 4px; }
.pick { position: relative; width: 114px; height: 26px; margin-top: 5px; }
.pick select { appearance: none; width: 114px; height: 26px; padding-left: 5px; font-size: 13px; background: linear-gradient(#5a5a5a, #4a4a4a); border: 1px solid #262626; border-radius: 3px; }
.pick::after { content: ""; position: absolute; right: 4px; top: 10px; border: 4px solid transparent; border-top: 5px solid #fff; border-bottom: 0; pointer-events: none; }
.dlg-foot { display: flex; justify-content: flex-end; gap: 9px; padding-top: 9px; }
.dlg-foot button { justify-content: center; width: 94px; height: 31px; border: 1px solid #262626; border-radius: 3px; background: linear-gradient(#565656, #4c4c4c); font-size: 14px; white-space: pre; color: #fff; }
.dlg-foot .primary { margin-right: 21px; border-color: #8fbdf0; }

/* Notes drawn over the screen */
.marks { position: absolute; top: 0; left: 0; width: 100%; height: 100%; fill: none; stroke: #fff; stroke-width: 5px; pointer-events: none; }
.memo { position: absolute; font: 27px/45px "Noto Sans CJK SC", sans-serif; color: #fff; white-space: pre; }
.memo span { font-family: "Noto Sans", sans-serif; line-height: 0; }
.memo-a { left: 1504px; top: 251px; }
.memo-b { left: 1495px; top: 757px; }

.source { margin-top: auto; padding: 0 9px 8px; text-align: right; font: 16px/20px "Liberation Sans", sans-serif; color: #e2e2e2; }
```
